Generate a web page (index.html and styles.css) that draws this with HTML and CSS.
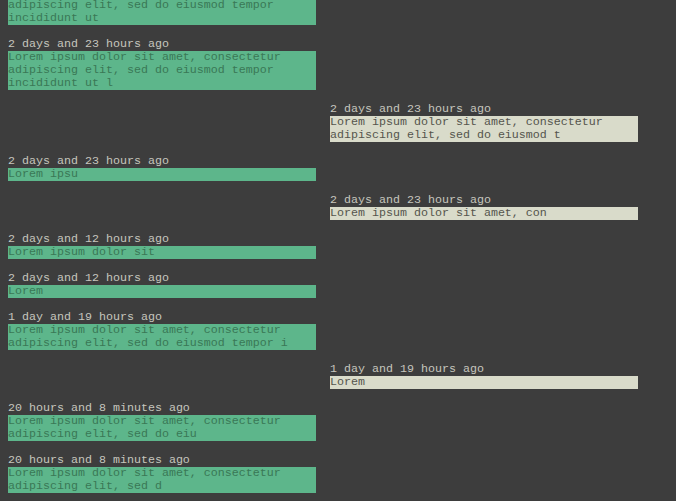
FILE: index.html
```html
<!doctype html>
<html lang="en">
<head>
  <meta charset="UTF-8">
  <meta name="viewport" content="width=device-width, initial-scale=1.0">
  <title>Messages</title>
  <link rel="stylesheet" href="styles.css">
</head>
<body>
  <div class="feed">
    <div class="msg mine">
      <div class="time">3 days ago</div>
      <div class="bubble">Lorem ipsum dolor sit amet, consectetur adipiscing elit, sed do eiusmod tempor incididunt ut</div>
    </div>
    <div class="msg mine">
      <div class="time">2 days and 23 hours ago</div>
      <div class="bubble">Lorem ipsum dolor sit amet, consectetur adipiscing elit, sed do eiusmod tempor incididunt ut l</div>
    </div>
    <div class="msg theirs">
      <div class="time">2 days and 23 hours ago</div>
      <div class="bubble">Lorem ipsum dolor sit amet, consectetur adipiscing elit, sed do eiusmod t</div>
    </div>
    <div class="msg mine">
      <div class="time">2 days and 23 hours ago</div>
      <div class="bubble">Lorem ipsu</div>
    </div>
    <div class="msg theirs">
      <div class="time">2 days and 23 hours ago</div>
      <div class="bubble">Lorem ipsum dolor sit amet, con</div>
    </div>
    <div class="msg mine">
      <div class="time">2 days and 12 hours ago</div>
      <div class="bubble">Lorem ipsum dolor sit</div>
    </div>
    <div class="msg mine">
      <div class="time">2 days and 12 hours ago</div>
      <div class="bubble">Lorem</div>
    </div>
    <div class="msg mine">
      <div class="time">1 day and 19 hours ago</div>
      <div class="bubble">Lorem ipsum dolor sit amet, consectetur adipiscing elit, sed do eiusmod tempor i</div>
    </div>
    <div class="msg theirs">
      <div class="time">1 day and 19 hours ago</div>
      <div class="bubble">Lorem</div>
    </div>
    <div class="msg mine">
      <div class="time">20 hours and 8 minutes ago</div>
      <div class="bubble">Lorem ipsum dolor sit amet, consectetur adipiscing elit, sed do eiu</div>
    </div>
    <div class="msg mine">
      <div class="time">20 hours and 8 minutes ago</div>
      <div class="bubble">Lorem ipsum dolor sit amet, consectetur adipiscing elit, sed d</div>
    </div>
  </div>
</body>
</html>
```

FILE: styles.css
```css
html, body {
    height: 100%;
}

body {
    margin: 0;
    padding: 0 8px;
    background: #3d3d3d;
    font-family: "Liberation Mono", "Courier New", monospace;
    font-size: 11.67px;
    line-height: 13px;
    overflow: hidden;
}

.feed {
    display: flex;
    flex-direction: column;
    margin-top: -27px; /* list is scrolled a little */
}

.msg {
    width: 308px;
    margin-bottom: 13px;
}

.msg.theirs {
    margin-left: 322px;
}

.time {
    color: #c6c6be;
}

.bubble {
    word-wrap: break-word;
}

.mine .bubble {
    background: #5db68b;
    color: #3a7856;
}

.theirs .bubble {
    background: #d9dbca;
    color: #55554d;
}
```
